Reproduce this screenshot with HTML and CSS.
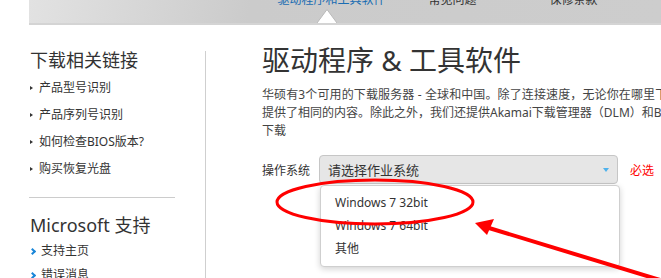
FILE: index.html
```html
<!DOCTYPE html>
<html lang="zh-CN">
<head>
  <meta charset="UTF-8">
  <meta name="viewport" content="width=device-width, initial-scale=1.0">
  <title>驱动程序 &amp; 工具软件</title>
  <link rel="stylesheet" href="styles.css">
</head>
<body>
  <div class="topnav">
    <ul class="nav_list">
      <li class="nav_item active">驱动程序和工具软件</li>
      <li class="nav_item">常见问题</li>
      <li class="nav_item">保修条款</li>
    </ul>
    <svg class="notch" width="20" height="14" viewBox="0 0 20 14">
      <polygon points="0,14 10,0.5 20,14" fill="#fff"/>
      <polyline points="0,14 10,0.5 20,14" fill="none" stroke="#b9b9b9" stroke-width="1"/>
    </svg>
  </div>

  <div class="wrap">
    <div class="sidebar">
      <h3 class="side_title">下载相关链接</h3>
      <ul class="side_links">
        <li>产品型号识别</li>
        <li>产品序列号识别</li>
        <li>如何检查BIOS版本?</li>
        <li>购买恢复光盘</li>
      </ul>
      <hr class="side_line">
      <h3 class="side_title ms">Microsoft 支持</h3>
      <ul class="side_links blue">
        <li>支持主页</li>
        <li>错误消息</li>
      </ul>
    </div>

    <div class="main">
      <h1 class="page_title">驱动程序 &amp; 工具软件</h1>
      <p class="intro">
        <span class="wide">华硕有3个可用的下载服务器 - 全球和中国。除了连接速度，无论你在哪里下载，两个服务器都</span><br>
        提供了相同的内容。除此之外，我们还提供Akamai下载管理器（DLM）和BitTorrent两种<br>
        下载
      </p>
      <div class="form_row">
        <span class="form_label">操作系统</span>
        <div class="select_wrap">
          <div class="select_box">请选择作业系统<span class="caret"></span></div>
          <ul class="dropdown">
            <li>Windows 7 32bit</li>
            <li>Windows 7 64bit</li>
            <li>其他</li>
          </ul>
        </div>
        <span class="required">必选</span>
      </div>
    </div>
  </div>

  <svg class="marks" width="661" height="278" viewBox="0 0 661 278">
    <ellipse cx="375" cy="202" rx="98" ry="22" fill="none" stroke="#f00" stroke-width="3"/>
    <line x1="489" y1="228" x2="670" y2="283" stroke="#f00" stroke-width="4"/>
    <polygon points="475,223 494,219 487,235" fill="#f00"/>
  </svg>
</body>
</html>
```

FILE: styles.css
```css
body {
  margin: 0;
  width: 661px;
  height: 278px;
  overflow: hidden;
  font-family: "Noto Sans", "Noto Sans CJK SC", sans-serif;
  color: #333;
  background-color: #fff;
}
ul {
  list-style: none;
  margin: 0;
  padding: 0;
}

/* top bar */
.topnav {
  position: relative;
  display: flex;
  align-items: flex-start;
  margin-left: 29px;
  height: 23px;
  background: linear-gradient(100deg, #e2e2e2, #cbcbcb 35%, #cdcdcd);
  border-bottom: 2px solid #d4d4d4;
}
.nav_list {
  display: flex;
  margin-top: -6px;
  padding-left: 242px;
}
.nav_item {
  width: 121px;
  text-align: center;
  font-size: 12px;
  line-height: 12px;
  color: #333;
}
.nav_item.active {
  color: #1a6db3;
}
.notch {
  position: absolute;
  left: 288px;
  top: 9px;
}

/* body */
.wrap {
  display: flex;
  margin-top: 26px;
}
.sidebar {
  flex: none;
  width: 175px;
  height: 240px;
  margin-left: 30px;
  border-right: 1px solid #cfcfcf;
}
.side_title {
  margin: 0 0 5px;
  font-size: 18px;
  line-height: 18px;
  font-weight: normal;
  color: #333;
}
.side_title.ms {
  margin-top: 18px;
}
.side_links li {
  display: flex;
  align-items: center;
  font-size: 12px;
  line-height: 27px;
  color: #333;
}
.side_links li::before {
  content: "";
  width: 0;
  height: 0;
  margin-right: 6px;
  border-left: 3px solid #333;
  border-top: 2.5px solid transparent;
  border-bottom: 2.5px solid transparent;
}
.side_links.blue li {
  line-height: 24px;
}
.side_links.blue li::before {
  width: 3px;
  height: 3px;
  margin: 0 6px 0 0;
  border: 0;
  border-top: 2px solid #1a86d8;
  border-right: 2px solid #1a86d8;
  transform: rotate(45deg);
}
.side_line {
  width: 146px;
  margin: 15px 0 0 -1px;
  border: 0;
  border-top: 1px solid #ccc;
}

.main {
  flex: none;
  width: 700px;
  margin-left: 56px;
}
.page_title {
  margin: -5px 0 0;
  font-size: 28px;
  line-height: 28px;
  font-weight: normal;
  color: #333;
}
.intro {
  margin: 12px 0 0;
  font-size: 12px;
  line-height: 18px;
  color: #444;
  white-space: nowrap;
}
.intro .wide {
  letter-spacing: 0.12px;
}
.form_row {
  display: flex;
  align-items: center;
  margin-top: 15px;
}
.form_label {
  width: 48px;
  margin-right: 9px;
  font-size: 12px;
  color: #333;
}
.select_wrap {
  position: relative;
  width: 299px;
}
.select_box {
  display: flex;
  align-items: center;
  justify-content: space-between;
  box-sizing: border-box;
  height: 29px;
  padding: 0 8px;
  border: 1px solid #c6c6c6;
  border-radius: 4px;
  background-color: #e6e6e6;
  font-size: 13px;
  color: #333;
}
.caret {
  width: 0;
  height: 0;
  border-left: 3.5px solid transparent;
  border-right: 3.5px solid transparent;
  border-top: 4px solid #4fb2ec;
}
.required {
  margin-left: 12px;
  font-size: 12px;
  color: #f00;
}
.dropdown {
  position: absolute;
  top: 30px;
  left: 1px;
  box-sizing: border-box;
  width: 300px;
  padding: 5px 0 6px;
  border: 1px solid #cfcfcf;
  border-radius: 4px;
  background-color: #fff;
  box-shadow: 0 2px 6px rgba(0, 0, 0, .18);
}
.dropdown li {
  padding-left: 14px;
  font-size: 12px;
  line-height: 23px;
  color: #333;
}

/* red marks drawn over the page */
.marks {
  position: absolute;
  left: 0;
  top: 0;
  pointer-events: none;
}
```
